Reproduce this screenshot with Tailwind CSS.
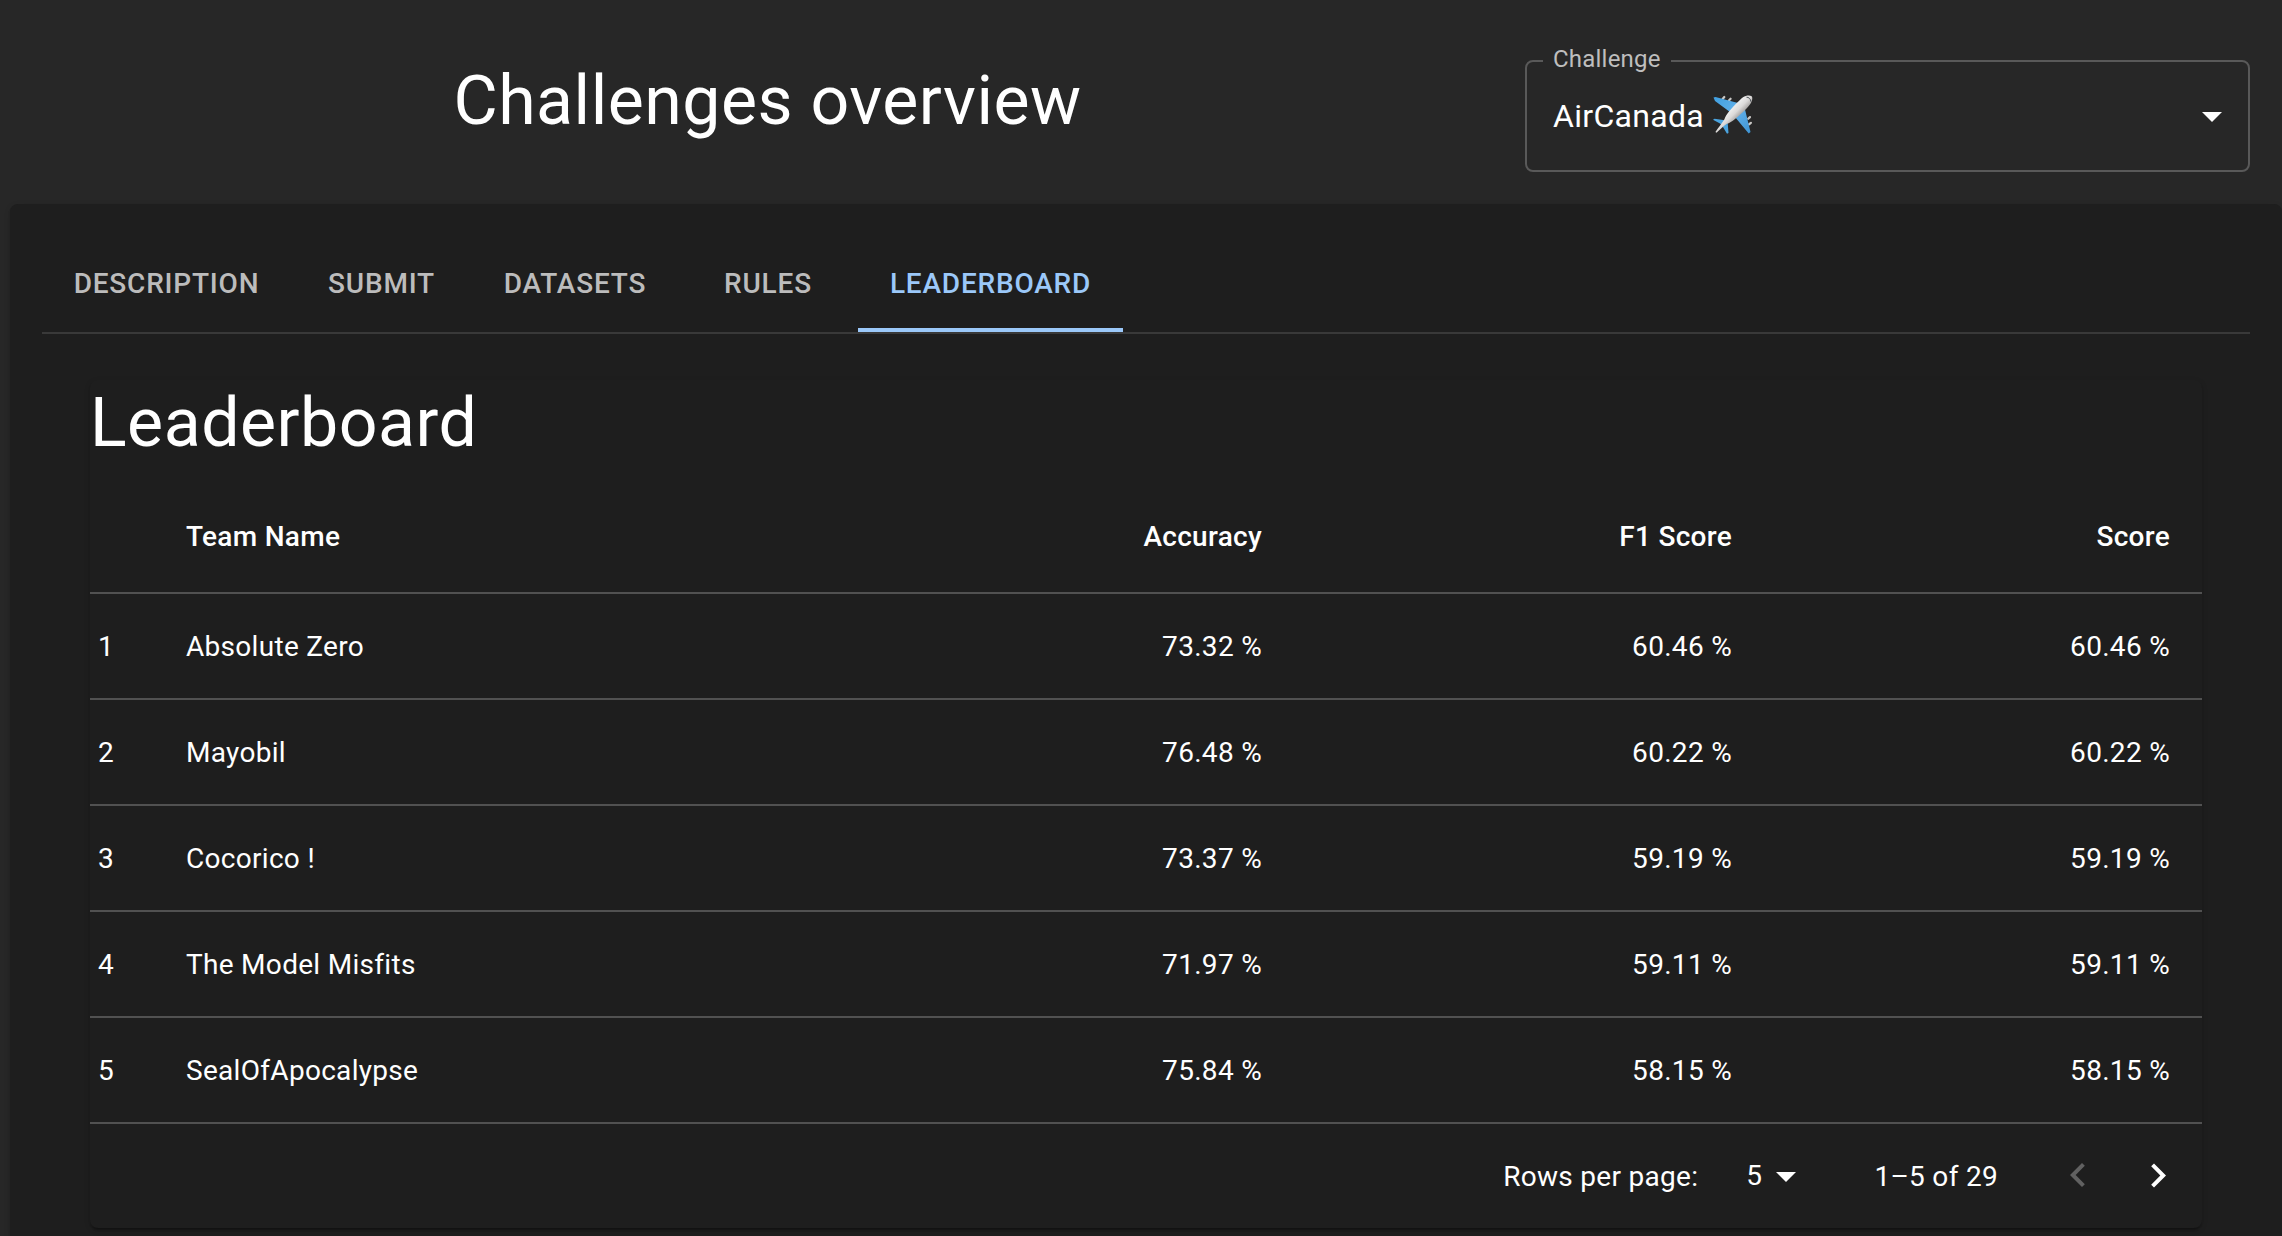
<!DOCTYPE html>
<html lang="en">
<head>
<meta charset="utf-8">
<title>Challenges overview</title>
<script src="https://cdn.jsdelivr.net/npm/@tailwindcss/browser@4"></script>
</head>
<body class="h-[1236px] overflow-hidden bg-[#272727] pl-[10px] font-[Roboto,sans-serif] text-[28px] tracking-[0.3px] text-white">
<header class="flex h-[204px] pr-8">
  <h1 class="flex-1 pt-[59px] text-center text-[68px] leading-[84px] tracking-[0.5px]">Challenges overview</h1>
  <div class="relative mt-[60px] flex h-28 w-[725px] items-center rounded-lg border-2 border-[#595959] pr-3 pl-[26px]">
    <span class="absolute -top-[17px] left-4 h-7 w-32 bg-[#272727] pl-[10px] text-2xl leading-7 tracking-[0.22px] text-[#bebebe]">Challenge</span>
    <span class="text-[32px] leading-[46px]">AirCanada</span>
    <svg class="-mt-[2px] ml-[9px] size-10" viewBox="0 0 40 40" role="img" aria-label="airplane">
      <defs>
        <linearGradient id="body" x1="0.35" y1="0.35" x2="0.65" y2="0.65"><stop offset="0" stop-color="#f5f5f5"/><stop offset=".5" stop-color="#dcdad9"/><stop offset="1" stop-color="#8f8b89"/></linearGradient>
        <linearGradient id="wing" x1="0" y1="0" x2="1" y2="1"><stop offset="0" stop-color="#3f9fe0"/><stop offset=".5" stop-color="#62b1ea"/><stop offset="1" stop-color="#3d93d3"/></linearGradient>
      </defs>
      <path stroke="#c9c7c5" stroke-width="2.2" stroke-linecap="round" d="M9.6 4 11.300 2M15.900 5.500 17.600 3.700M35.200 23.800 37 22.100M36 29.400 37.900 27.800"/>
      <path fill="url(#wing)" d="M.5 2.500 2.500 2 25 8 32 14.500 37.500 37 35.700 38.600 22 22 17 17 2 6z"/>
      <path fill="#4ba4df" d="M0 24.700 1.500 23.800 12 25.200 14.700 28 15.500 38 14 38.800 9.500 31.300 7 28.500z"/>
      <path fill="url(#body)" d="M2.400 37C5 33 8.500 29 11.300 24.500C12.500 21.500 13.800 19 16 16.500C20 12 26 5.500 30 2.300C33 .100 37 0 38.600 1.200C40 2.600 39.200 6 37.300 9C33.500 14 27 20 22 24C19 26.400 16.500 28 13.500 29C10 31.600 6.700 34.800 3.500 37.800z"/>
      <path fill="none" stroke="#4c5358" stroke-width="1" d="M33.500 2.200C35.500 1.900 38 4.200 37.800 6.600"/>
    </svg>
    <svg class="ml-auto size-12" viewBox="0 0 24 24" fill="#fff"><path d="M7 10l5 5 5-5z"/></svg>
  </div>
</header>

<main class="flex h-[1032px] flex-col rounded-t-lg bg-[#1e1e1e] px-8 pt-8 shadow-[0_4px_2px_-2px_rgba(0,0,0,0.2),0_2px_2px_rgba(0,0,0,0.14),0_2px_6px_rgba(0,0,0,0.12)]">
  <nav class="flex h-[98px] shrink-0 border-b-2 border-[#393939] text-center font-medium tracking-[0.8px] text-[#bcbcbc]">
    <div class="w-[249px] leading-[95px]">DESCRIPTION</div>
    <div class="w-[181px] leading-[95px]">SUBMIT</div>
    <div class="w-[206px] leading-[95px]">DATASETS</div>
    <div class="w-[180px] leading-[95px]">RULES</div>
    <div class="h-24 w-[265px] border-b-4 border-[#9bc8f9] leading-[95px] text-[#9bc8f9]">LEADERBOARD</div>
  </nav>

  <section class="mx-12 mt-[46px] h-[848px] shrink-0 rounded-lg shadow-[0_4px_2px_-2px_rgba(0,0,0,0.2),0_2px_2px_rgba(0,0,0,0.14),0_2px_6px_rgba(0,0,0,0.12)]">
    <h2 class="h-[100px] pt-px text-[68px] leading-[84px] tracking-[0.5px]">Leaderboard</h2>
    <table class="w-full table-fixed border-separate border-spacing-0 text-right [&_td]:h-[106px] [&_td]:border-b-2 [&_td]:border-[#515151] [&_td]:p-0 [&_td]:pt-[2px] [&_td]:pr-8 [&_th]:h-[114px] [&_th]:border-b-2 [&_th]:border-[#515151] [&_th]:p-0 [&_th]:pt-[2px] [&_th]:pr-8 [&_th]:font-medium">
      <colgroup><col class="w-24"><col class="w-[637px]"><col class="w-[471px]"><col class="w-[470px]"><col class="w-[438px]"></colgroup>
      <thead><tr><th></th><th class="text-left">Team Name</th><th>Accuracy</th><th>F1 Score</th><th>Score</th></tr></thead>
      <tbody>
        <tr><td class="text-left"><span class="pl-2">1</span></td><td class="text-left">Absolute Zero</td><td>73.32 %</td><td>60.46 %</td><td>60.46 %</td></tr>
        <tr><td class="text-left"><span class="pl-2">2</span></td><td class="text-left">Mayobil</td><td>76.48 %</td><td>60.22 %</td><td>60.22 %</td></tr>
        <tr><td class="text-left"><span class="pl-2">3</span></td><td class="text-left">Cocorico !</td><td>73.37 %</td><td>59.19 %</td><td>59.19 %</td></tr>
        <tr><td class="text-left"><span class="pl-2">4</span></td><td class="text-left">The Model Misfits</td><td>71.97 %</td><td>59.11 %</td><td>59.11 %</td></tr>
        <tr><td class="text-left"><span class="pl-2">5</span></td><td class="text-left">SealOfApocalypse</td><td>75.84 %</td><td>58.15 %</td><td>58.15 %</td></tr>
      </tbody>
    </table>
    <div class="flex h-[104px] items-center justify-end pr-5">
      <span class="pt-[2px]">Rows per page:</span>
      <span class="ml-12">5</span>
      <svg class="size-12" viewBox="0 0 24 24" fill="#fff"><path d="M7 10l5 5 5-5z"/></svg>
      <span class="ml-16 pt-[2px]">1–5 of 29</span>
      <svg class="ml-14 size-12" viewBox="0 0 24 24" fill="#616161"><path d="M15.410 16.090l-4.580-4.590 4.580-4.590L14 5.500l-6 6 6 6z"/></svg>
      <svg class="ml-8 size-12" viewBox="0 0 24 24" fill="#fff"><path d="M8.590 16.340l4.580-4.590-4.580-4.590L10 5.750l6 6-6 6z"/></svg>
    </div>
  </section>
</main>
</body>
</html>
